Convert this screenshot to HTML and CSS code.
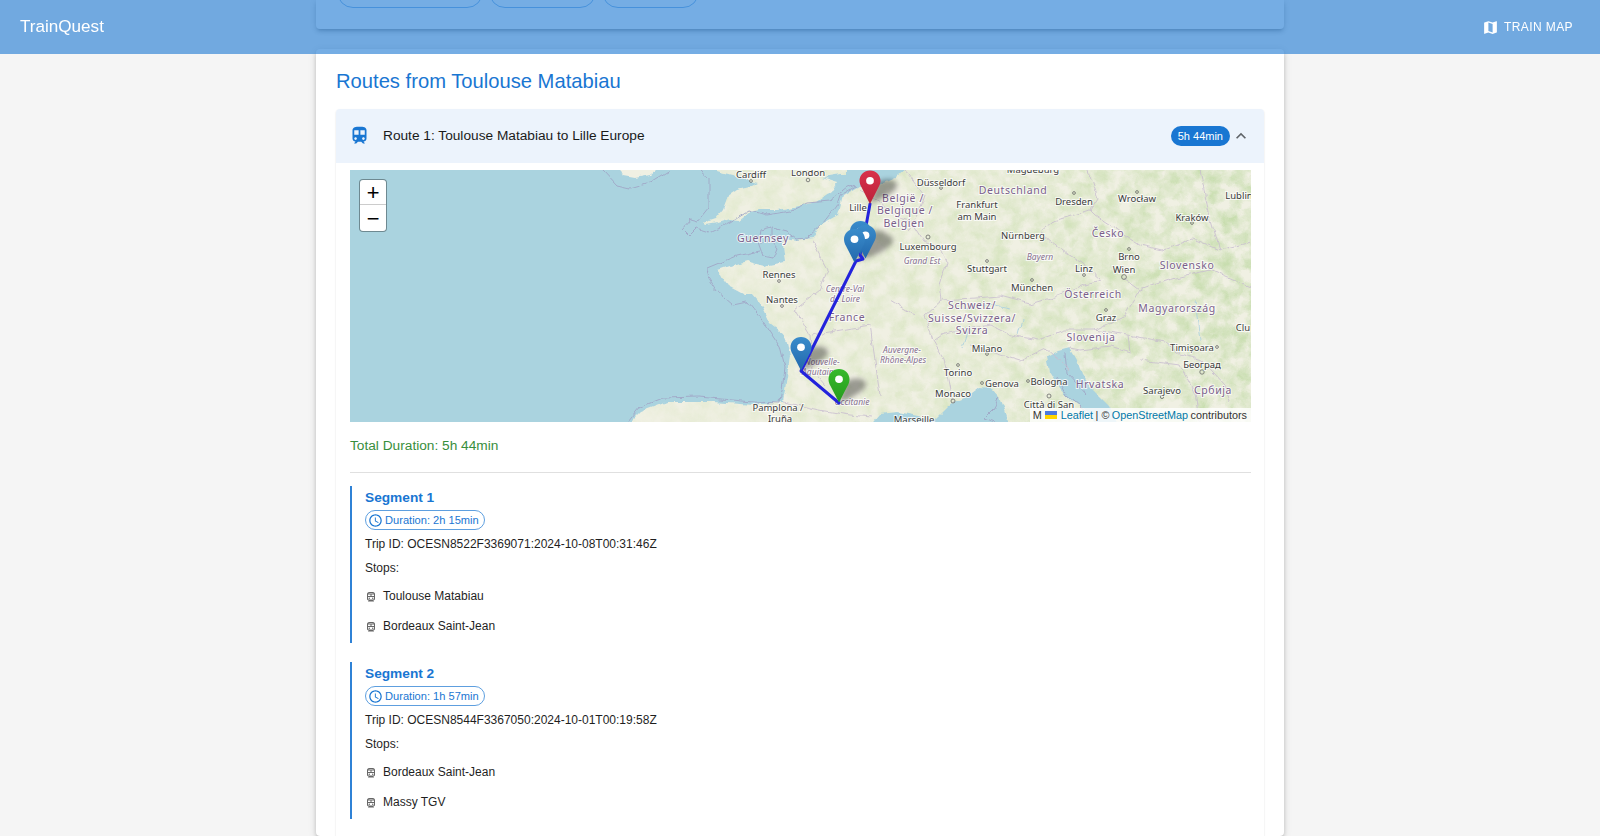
FILE: index.html
```html
<!DOCTYPE html>
<html lang="en">
<head>
<meta charset="utf-8">
<title>TrainQuest</title>
<link rel="stylesheet" href="styles.css">
</head>
<body>
<header class="appbar">
  <span class="brand">TrainQuest</span>
  <a class="nav-btn">
    <svg class="nav-icon" viewBox="0 0 24 24"><path d="M20.5 3l-.16.03L15 5.1 9 3 3.36 4.9c-.21.07-.36.25-.36.48V20.5c0 .28.22.5.5.5l.16-.03L9 18.9l6 2.1 5.64-1.9c.21-.07.36-.25.36-.48V3.5c0-.28-.22-.5-.5-.5zM15 19l-6-2.11V5l6 2.11V19z"/></svg>
    <span>Train Map</span>
  </a>
</header>

<main class="page">
  <section class="search-card">
    <span class="ghost-chip chip-a"></span>
    <span class="ghost-chip chip-b"></span>
    <span class="ghost-chip chip-c"></span>
  </section>

  <section class="results">
    <h2 class="results-title">Routes from Toulouse Matabiau</h2>
    <article class="route">
      <div class="route-summary">
        <svg class="route-icon" viewBox="0 0 24 24"><path d="M12 2c-4 0-8 .5-8 4v9.5C4 17.43 5.57 19 7.5 19L6 20.5v.5h2.23l2-2H14l2 2h2v-.5L16.5 19c1.93 0 3.5-1.57 3.5-3.5V6c0-3.5-3.58-4-8-4M7.5 17c-.83 0-1.5-.67-1.5-1.5S6.67 14 7.5 14s1.5.67 1.5 1.5S8.33 17 7.5 17m3.5-6H6V6h5zm2 0V6h5v5zm3.5 6c-.83 0-1.5-.67-1.5-1.5s.67-1.5 1.5-1.5 1.5.67 1.5 1.5-.67 1.5-1.5 1.5"/></svg>
        <span class="route-name">Route 1: Toulouse Matabiau to Lille Europe</span>
        <span class="route-chip">5h 44min</span>
        <svg class="route-chevron" viewBox="0 0 24 24"><path d="M12 8l-6 6 1.41 1.41L12 10.83l4.59 4.58L18 14z"/></svg>
      </div>

      <div class="route-details">
        <div class="map">
          <svg class="map-canvas" viewBox="0 0 901 252" width="901" height="252">
            <defs>
              <filter id="mottle" x="0" y="0" width="100%" height="100%">
                <feTurbulence type="fractalNoise" baseFrequency="0.07" numOctaves="5" seed="7" result="n"/>
                <feColorMatrix in="n" type="matrix" values="0 0 0 0 0 0 0 0 0 0 0 0 0 0 0 1.9 0 0 0 -0.55" result="a"/>
                <feComposite in="SourceGraphic" in2="a" operator="in"/>
              </filter>
              <filter id="rough" x="-2%" y="-2%" width="104%" height="104%">
                <feTurbulence type="fractalNoise" baseFrequency="0.09" numOctaves="3" seed="3" result="w"/>
                <feDisplacementMap in="SourceGraphic" in2="w" scale="6" xChannelSelector="R" yChannelSelector="G"/>
              </filter>
              <filter id="soft" x="-50%" y="-50%" width="200%" height="200%"><feGaussianBlur stdDeviation="2.8"/></filter>
              <linearGradient id="east" x1="0" x2="1" y1="0" y2="0">
                <stop offset="0" stop-color="#d6e4bd" stop-opacity=".25"/>
                <stop offset="0.45" stop-color="#d4e3bb" stop-opacity=".7"/>
                <stop offset="1" stop-color="#c3dba9" stop-opacity=".95"/>
              </linearGradient>
              <linearGradient id="gBlue" x1="0" x2="0" y1="0" y2="1"><stop offset="0" stop-color="#3a8ccb"/><stop offset="1" stop-color="#2268ac"/></linearGradient>
              <linearGradient id="gRed" x1="0" x2="0" y1="0" y2="1"><stop offset="0" stop-color="#d8314c"/><stop offset="1" stop-color="#bb2139"/></linearGradient>
              <linearGradient id="gGreen" x1="0" x2="0" y1="0" y2="1"><stop offset="0" stop-color="#37b92c"/><stop offset="1" stop-color="#269a1d"/></linearGradient>
              <path id="pinShape" d="M12.5 0C5.4 0 0 5.6 0 12.4c0 3 1 5.8 2.4 8.3L12.5 41l10.1-20.3c1.4-2.5 2.4-5.3 2.4-8.3C25 5.6 19.6 0 12.5 0z"/>
              <path id="pinShadow" d="M0 0L6-20C12-26 26-26 27-19 28-13 14-6 0 0z"/>
            </defs>

            <rect class="sea" width="901" height="252"/>

            <g filter="url(#rough)">
              <g class="land">
                <path id="continent" d="M555 0L546 8 530 15 510 16 493 26 488 45 470 55 467 61 463 68 447 70 436 68 433 74 435 92 415 96 397 91 380 96 368 100 372 108 378 116 395 125 402 125 413 138 420 153 433 163 437 173 440 187 435 220 433 232 403 235 363 232 317 232 290 242 280 252V262H911V-10H555z"/>
                <path id="england" d="M353 53L365 49 373 39 378 26 387 20 400 17 408 13 400 11 387 6 368 1 366-10H497V5L490 5 472 8 488 13 483 21 467 32 443 37 427 40 410 40 400 42 390 50 380 49 367 53 355 55z"/>
                <path id="ireland" d="M267-10L274 6 285 8 300 5 318-10z"/>
              </g>
              <g filter="url(#mottle)">
                <use href="#continent" fill="url(#east)"/>
                <use href="#england" fill="#d6e4bd" fill-opacity=".6"/>
              </g>
              <g class="sea">
                <path d="M515 262L530 244 548 242 568 246 586 249 597 238 604 232 618 226 630 217 641 218 650 228 655 240 662 262z"/>
                <path d="M720 178L708 181 697 187 700 202 710 218 723 232 737 240 750 262H772L760 237 743 220 732 205 727 190z"/>
              </g>
              <g class="marine">
                <path d="M253 0L267 15 280 18 300 12 320 0"/>
                <path d="M350 0L359 8V37L347 52"/>
                <path d="M347 52L340 50 333 58 340 65 347 58 360 62 380 52 400 40 417 45 440 41 457 33 480 31 497 18 507 15"/>
                <path d="M410 60L422 57 437 61 447 69 457 68 473 53 487 35 490 26 507 16"/>
                <path d="M410 60L408 72 413 86 423 88 427 78 422 72 410 72M422 57V72"/>
                <path d="M410 81L387 86 358 98 357 105 367 121 383 135 397 132 412 150 430 177 435 197 432 220 430 233 403 232 350 227 313 228 290 237 278 252"/>
                <path d="M715 183L717 203 737 225M707 207L717 225 737 242"/>
                <path d="M650 228L643 240 635 248 646 252"/>
              </g>
              <g class="border">
                <path d="M510 20L530 32 548 48 562 52 575 72 590 78 597 92 590 115 592 130 575 145 583 170 595 190 602 225 604 232"/>
                <path d="M433 232L470 240 500 245 522 247"/>
                <path d="M555 0L575 25 570 40 558 60"/>
                <path d="M592 130L625 128 650 126 680 134 700 128 725 118 752 110 732 92 712 80 690 62 702 52 740 40 745 45 765 58 790 75 812 80 842 68 870 80 901 72"/>
                <path d="M738 0L748 28 740 40M850 0L858 40 870 80"/>
                <path d="M774 108L790 120 775 145 745 160 715 160 688 170 660 165 640 155 612 160 592 165 585 170"/>
                <path d="M790 120L825 108 860 100 901 118"/>
                <path d="M745 160L778 165 815 172 830 184 852 190 875 215 880 232M778 165L780 182 760 176 730 180 720 178"/>
                <path d="M790 190L830 195 845 225 850 252"/>
                <path d="M540 130L565 145M462 165L520 155 525 190M462 70L478 100 470 120 445 140 460 165 462 200 475 215M525 190L530 225"/>
                <path d="M620 175L670 190 695 178 720 200"/>
              </g>
              <g class="rivers">
                <path d="M615 140L640 134 660 138M612 178L618 160M845 130L850 170M672 150L668 165"/>
              </g>
            </g>

            <g class="dots">
              <circle cx="458" cy="10" r="1.8"/><circle cx="591" cy="18" r="1.4"/><circle cx="724" cy="23" r="1.4"/><circle cx="787" cy="22" r="1.4"/><circle cx="842" cy="53" r="1.4"/><circle cx="578" cy="67" r="2"/><circle cx="779" cy="79" r="1.4"/><circle cx="734" cy="105" r="1.4"/><circle cx="774" cy="107" r="2.4"/><circle cx="637" cy="91" r="1.4"/><circle cx="682" cy="110" r="1.4"/><circle cx="756" cy="140" r="1.4"/><circle cx="867" cy="177" r="1.4"/><circle cx="637" cy="184" r="1.4"/><circle cx="608" cy="195" r="1.4"/><circle cx="852" cy="202" r="2.2"/><circle cx="632" cy="213" r="1.4"/><circle cx="678" cy="211" r="1.4"/><circle cx="812" cy="227" r="1.6"/><circle cx="603" cy="231" r="2"/><circle cx="699" cy="226" r="2"/><circle cx="401" cy="11" r="1.4"/><circle cx="429" cy="111" r="1.4"/><circle cx="432" cy="136" r="1.4"/>
            </g>

            <g class="place">
              <text x="458" y="6">London</text><text x="508" y="41">Lille</text><text x="591" y="16">Düsseldorf</text><text x="683" y="3">Magdeburg</text><text x="724" y="35">Dresden</text><text x="787" y="32">Wrocław</text><text x="889" y="29">Lublin</text><text x="627" y="38">Frankfurt</text><text x="627" y="50">am Main</text><text x="842" y="51">Kraków</text><text x="673" y="69">Nürnberg</text><text x="578" y="80">Luxembourg</text><text x="779" y="90">Brno</text><text x="734" y="102">Linz</text><text x="774" y="103">Wien</text><text x="637" y="102">Stuttgart</text><text x="682" y="121">München</text><text x="756" y="151">Graz</text><text x="893" y="161">Clu</text><text x="842" y="181">Timișoara</text><text x="637" y="182">Milano</text><text x="608" y="206">Torino</text><text x="852" y="198">Београд</text><text x="652" y="217">Genova</text><text x="699" y="215">Bologna</text><text x="812" y="224">Sarajevo</text><text x="603" y="227">Monaco</text><text x="699" y="238">Città di San</text><text x="564" y="253">Marseille</text><text x="428" y="241">Pamplona /</text><text x="430" y="252">Iruña</text><text x="401" y="8">Cardiff</text><text x="429" y="108">Rennes</text><text x="432" y="133">Nantes</text>
            </g>
            <g class="country">
              <text x="663" y="24">Deutschland</text><text x="553" y="32">België /</text><text x="555" y="44">Belgique /</text><text x="554" y="57">Belgien</text><text x="758" y="67">Česko</text><text x="837" y="99">Slovensko</text><text x="743" y="128">Österreich</text><text x="497" y="151">France</text><text x="622" y="139">Schweiz/</text><text x="622" y="152">Suisse/Svizzera/</text><text x="622" y="164">Svizra</text><text x="827" y="142">Magyarország</text><text x="741" y="171">Slovenija</text><text x="750" y="218">Hrvatska</text><text x="863" y="224">Србија</text><text x="413" y="72">Guernsey</text>
            </g>
            <g class="region">
              <text x="572" y="94">Grand Est</text><text x="690" y="90">Bayern</text><text x="495" y="122">Centre-Val</text><text x="495" y="132">de Loire</text><text x="552" y="183">Auvergne-</text><text x="553" y="193">Rhône-Alpes</text><text x="472" y="195">Nouvelle-</text><text x="470" y="205">Aquitaine</text><text x="502" y="235">Occitanie</text>
            </g>

            <g class="shadows" filter="url(#soft)">
              <use href="#pinShadow" x="520" y="34"/>
              <use href="#pinShadow" x="510" y="85"/>
              <use href="#pinShadow" x="516" y="89"/>
              <use href="#pinShadow" x="505" y="92"/>
              <use href="#pinShadow" x="451" y="201"/>
              <use href="#pinShadow" x="489" y="233"/>
            </g>

            <polyline class="route-line" points="520,34 516,56 510,85 513,89 506,91 451,201 489,233"/>

            <g class="pin blue" transform="translate(500 51) scale(.84 .82)"><use href="#pinShape"/><circle cx="12.5" cy="12.5" r="4.6"/></g>
            <g class="pin blue" transform="translate(505 55) scale(.84 .82)"><use href="#pinShape"/><circle cx="12.5" cy="12.5" r="4.6"/></g>
            <g class="pin blue" transform="translate(494 59) scale(.84 .82)"><use href="#pinShape"/><circle cx="12.5" cy="12.5" r="4.6"/></g>
            <g class="pin blue" transform="translate(440.5 167) scale(.84 .82)"><use href="#pinShape"/><circle cx="12.5" cy="12.5" r="4.6"/></g>
            <g class="pin red" transform="translate(509.5 .4) scale(.84 .82)"><use href="#pinShape"/><circle cx="12.5" cy="12.5" r="4.6"/></g>
            <g class="pin green" transform="translate(478.5 199) scale(.84 .82)"><use href="#pinShape"/><circle cx="12.5" cy="12.5" r="4.6"/></g>
          </svg>

          <div class="zoom-control">
            <span class="zoom-btn zoom-in">+</span>
            <span class="zoom-btn">−</span>
          </div>
          <div class="attribution">
            <span>M</span>
            <svg class="flag" viewBox="0 0 12 8"><rect width="12" height="4" fill="#4C7BE1"/><rect y="4" width="12" height="4" fill="#FFD500"/></svg>
            <a class="attr-link">Leaflet</a> <span>| ©</span> <a class="attr-link">OpenStreetMap</a> <span>contributors</span>
          </div>
        </div>

        <p class="total">Total Duration: 5h 44min</p>
        <hr class="divider">

        <section class="segment">
          <h3 class="segment-title">Segment 1</h3>
          <span class="duration-chip">
            <svg class="clock" viewBox="0 0 24 24"><path d="M11.99 2C6.47 2 2 6.48 2 12s4.47 10 9.99 10C17.52 22 22 17.52 22 12S17.52 2 11.99 2M12 20c-4.42 0-8-3.58-8-8s3.58-8 8-8 8 3.58 8 8-3.58 8-8 8m.5-13H11v6l5.25 3.15.75-1.23-4.5-2.67z"/></svg>
            Duration: 2h 15min
          </span>
          <p class="trip">Trip ID: OCESN8522F3369071:2024-10-08T00:31:46Z</p>
          <p class="stops-label">Stops:</p>
          <ul class="stops">
            <li class="stop"><svg class="stop-icon" viewBox="0 0 24 24"><path d="M12 2c-4 0-8 .5-8 4v9.5C4 17.43 5.57 19 7.5 19L6 20.5v.5h12v-.5L16.5 19c1.93 0 3.5-1.57 3.5-3.5V6c0-3.5-3.58-4-8-4m0 2c3.71 0 5.13.46 5.67 1H6.43c.6-.52 2.05-1 5.57-1M6 7h5v3H6zm12 8.5c0 .83-.67 1.5-1.5 1.5h-9c-.83 0-1.5-.67-1.5-1.5V12h12zm0-5.5h-5V7h5z"/><circle cx="8.5" cy="14.5" r="1.5"/><circle cx="15.5" cy="14.5" r="1.5"/></svg>Toulouse Matabiau</li>
            <li class="stop"><svg class="stop-icon" viewBox="0 0 24 24"><path d="M12 2c-4 0-8 .5-8 4v9.5C4 17.43 5.57 19 7.5 19L6 20.5v.5h12v-.5L16.5 19c1.93 0 3.5-1.57 3.5-3.5V6c0-3.5-3.58-4-8-4m0 2c3.71 0 5.13.46 5.67 1H6.43c.6-.52 2.05-1 5.57-1M6 7h5v3H6zm12 8.5c0 .83-.67 1.5-1.5 1.5h-9c-.83 0-1.5-.67-1.5-1.5V12h12zm0-5.5h-5V7h5z"/><circle cx="8.5" cy="14.5" r="1.5"/><circle cx="15.5" cy="14.5" r="1.5"/></svg>Bordeaux Saint-Jean</li>
          </ul>
        </section>

        <section class="segment">
          <h3 class="segment-title">Segment 2</h3>
          <span class="duration-chip">
            <svg class="clock" viewBox="0 0 24 24"><path d="M11.99 2C6.47 2 2 6.48 2 12s4.47 10 9.99 10C17.52 22 22 17.52 22 12S17.52 2 11.99 2M12 20c-4.42 0-8-3.58-8-8s3.58-8 8-8 8 3.58 8 8-3.58 8-8 8m.5-13H11v6l5.25 3.15.75-1.23-4.5-2.67z"/></svg>
            Duration: 1h 57min
          </span>
          <p class="trip">Trip ID: OCESN8544F3367050:2024-10-01T00:19:58Z</p>
          <p class="stops-label">Stops:</p>
          <ul class="stops">
            <li class="stop"><svg class="stop-icon" viewBox="0 0 24 24"><path d="M12 2c-4 0-8 .5-8 4v9.5C4 17.43 5.57 19 7.5 19L6 20.5v.5h12v-.5L16.5 19c1.93 0 3.5-1.57 3.5-3.5V6c0-3.5-3.58-4-8-4m0 2c3.71 0 5.13.46 5.67 1H6.43c.6-.52 2.05-1 5.57-1M6 7h5v3H6zm12 8.5c0 .83-.67 1.5-1.5 1.5h-9c-.83 0-1.5-.67-1.5-1.5V12h12zm0-5.5h-5V7h5z"/><circle cx="8.5" cy="14.5" r="1.5"/><circle cx="15.5" cy="14.5" r="1.5"/></svg>Bordeaux Saint-Jean</li>
            <li class="stop"><svg class="stop-icon" viewBox="0 0 24 24"><path d="M12 2c-4 0-8 .5-8 4v9.5C4 17.43 5.57 19 7.5 19L6 20.5v.5h12v-.5L16.5 19c1.93 0 3.5-1.57 3.5-3.5V6c0-3.5-3.58-4-8-4m0 2c3.71 0 5.13.46 5.67 1H6.43c.6-.52 2.05-1 5.57-1M6 7h5v3H6zm12 8.5c0 .83-.67 1.5-1.5 1.5h-9c-.83 0-1.5-.67-1.5-1.5V12h12zm0-5.5h-5V7h5z"/><circle cx="8.5" cy="14.5" r="1.5"/><circle cx="15.5" cy="14.5" r="1.5"/></svg>Massy TGV</li>
          </ul>
        </section>
      </div>
    </article>
  </section>
</main>
</body>
</html>
```

FILE: styles.css
```css
* { box-sizing: border-box; }

html, body {
  margin: 0;
  height: 836px;
  overflow: hidden;
  background: #f5f5f5;
  color: #1f1f1f;
  font-family: "Liberation Sans", Arial, sans-serif;
}

/* App bar: translucent, floats over the scrolled page */
.appbar {
  position: fixed;
  top: 0;
  left: 0;
  right: 0;
  z-index: 10;
  height: 54px;
  display: flex;
  align-items: center;
  justify-content: space-between;
  padding: 0 27px 0 20px;
  background: rgba(25, 118, 210, 0.6);
  color: #fff;
}

.brand { font-size: 17.1px; }

.nav-btn {
  display: flex;
  align-items: center;
  gap: 5px;
  font-size: 12px;
  letter-spacing: 0.4px;
  text-transform: uppercase;
}

.nav-icon { width: 17px; height: 17px; fill: #fff; }

.page {
  width: 968px;
  margin: 0 auto;
}

.search-card {
  display: flex;
  align-items: flex-end;
  gap: 6px;
  height: 29px;
  margin-bottom: 20px;
  padding: 0 21px 21px;
  background: #fff;
  border-radius: 0 0 4px 4px;
  box-shadow: 0 3px 3px -2px rgba(0,0,0,.2), 0 3px 4px rgba(0,0,0,.14), 0 1px 8px rgba(0,0,0,.12);
}

.ghost-chip {
  flex: none;
  height: 32px;
  border: 1px solid rgba(25,118,210,.5);
  border-radius: 16px;
}
.chip-a { width: 146px; }
.chip-b { width: 107px; }
.chip-c { width: 97px; }

.results {
  height: 787px;
  padding: 20px 20px 0;
  background: #fff;
  border-radius: 4px;
  box-shadow: 0 3px 3px -2px rgba(0,0,0,.2), 0 3px 4px rgba(0,0,0,.14), 0 1px 8px rgba(0,0,0,.12);
}

.results-title {
  margin: 0 0 15px;
  font-size: 20.2px;
  line-height: 25px;
  font-weight: 400;
  color: #1976d2;
}

.route {
  height: 727px;
  border-radius: 4px 4px 0 0;
  box-shadow: 0 1px 2px rgba(0,0,0,.14);
}

.route-summary {
  display: flex;
  align-items: center;
  height: 54px;
  padding: 0 13px;
  background: #ecf3fc;
  border-radius: 4px 4px 0 0;
}

.route-icon { width: 21px; height: 21px; fill: #1976d2; flex: none; margin: 0 13px 2px 0; }

.route-name { flex: 1; padding-bottom: 2px; font-size: 13.7px; color: #1a1a1a; }

.route-chip {
  display: flex;
  align-items: center;
  height: 20px;
  padding: 0 7px;
  border-radius: 10px;
  background: #1976d2;
  color: #fff;
  font-size: 11px;
}

.route-chevron { width: 20px; height: 20px; margin-left: 1px; fill: #5f6368; flex: none; }

.route-details { padding: 7px 13px 0 14px; }

.map {
  position: relative;
  height: 252px;
  overflow: hidden;
}

.map-canvas { display: block; }

.sea { fill: #aad3df; }
.land { fill: #f0f0e3; }
.marine, .border, .rivers { fill: none; stroke-linejoin: round; }
.marine { stroke: #a0a6c6; stroke-width: .9; }
.border { stroke: #c8bccf; stroke-width: .8; }
.rivers { stroke: #a8cfe0; stroke-width: .8; }
.dots { fill: none; stroke: #6b6b6b; stroke-width: .8; }

.place text, .country text, .region text {
  font-family: "Noto Sans", "DejaVu Sans", sans-serif;
  text-anchor: middle;
  paint-order: stroke;
  stroke: rgba(255,255,255,.75);
  stroke-width: 2px;
}
.place text { font-size: 9.5px; fill: #3b3b3b; }
.country text { font-size: 10.5px; letter-spacing: .6px; fill: #7a5f8b; }
.region text { font-size: 8.5px; font-style: italic; fill: #86708f; }

.shadows { fill: #000; opacity: .36; }

.route-line {
  fill: none;
  stroke: #2323dc;
  stroke-width: 3;
  stroke-linejoin: round;
  stroke-linecap: round;
}

.pin circle { fill: #fff; }
.pin.blue use { fill: url(#gBlue); }
.pin.red use { fill: url(#gRed); }
.pin.green use { fill: url(#gGreen); }

.zoom-control {
  position: absolute;
  top: 10px;
  left: 10px;
  display: flex;
  flex-direction: column;
  width: 26px;
  background: #fff;
  border-radius: 3px;
  box-shadow: 0 0 0 1px rgba(0,0,0,.35);
}

.zoom-btn {
  display: flex;
  align-items: center;
  justify-content: center;
  height: 26px;
  padding-top: 4px;
  font-family: "Liberation Mono", monospace;
  font-size: 22px;
  font-weight: 400;
  color: #000;
}
.zoom-in { height: 25px; border-bottom: 1px solid #ccc; }

.attribution {
  position: absolute;
  right: 0;
  bottom: 0;
  display: flex;
  align-items: center;
  gap: 2.5px;
  height: 14px;
  padding: 0 4px 0 3px;
  background: rgba(255,255,255,.8);
  font-size: 10.8px;
  color: #333;
  white-space: nowrap;
}

.attr-link { color: #0078a8; }
.flag { width: 12px; height: 8px; margin: 0 1px; }

.total {
  margin: 14px 0 0;
  font-size: 13.7px;
  line-height: 20px;
  color: #388e3c;
}

.divider {
  height: 1px;
  margin: 16px 0 13px;
  border: 0;
  background: #e0e0e0;
}

.segment {
  margin-bottom: 19px;
  padding: 0 0 2px 13px;
  border-left: 2px solid #2f82d6;
}
.segment:last-child { margin-bottom: 0; }

.segment-title {
  margin: 0 0 -2px;
  font-size: 13.7px;
  line-height: 24px;
  font-weight: 700;
  color: #1976d2;
}

.duration-chip {
  display: inline-flex;
  align-items: center;
  gap: 2px;
  height: 20px;
  margin-top: 2px;
  padding: 0 5px 0 2px;
  border: 1px solid rgba(25,118,210,.7);
  border-radius: 10px;
  color: #1976d2;
  font-size: 11.1px;
  vertical-align: top;
}

.clock { width: 15px; height: 15px; fill: #1976d2; }

.trip, .stops-label {
  margin: 0;
  font-size: 12px;
  line-height: 18px;
  color: #1f1f1f;
}
.trip { margin-top: 5px; }
.stops-label { margin-top: 6px; }

.stops {
  list-style: none;
  margin: 4px 0 0;
  padding: 0;
}

.stop {
  display: flex;
  align-items: center;
  height: 30px;
  font-size: 12px;
  color: #1f1f1f;
}

.stop-icon { width: 12px; height: 12px; margin: 1px 6px 0 0; fill: #666; flex: none; }
```
